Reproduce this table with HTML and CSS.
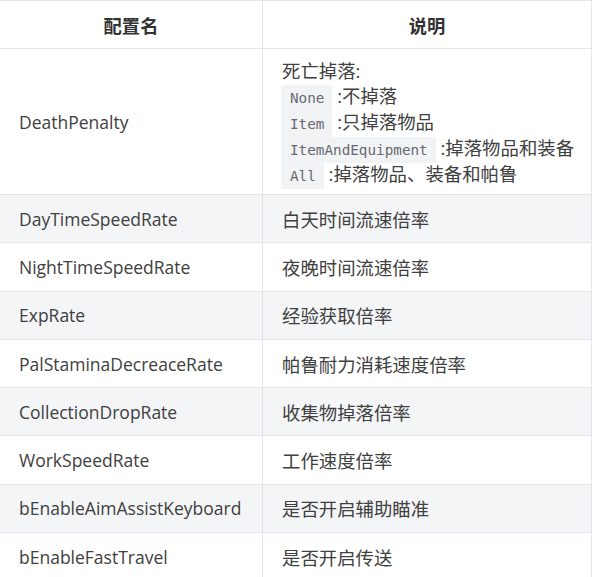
FILE: index.html
```html
<!DOCTYPE html>
<html lang="zh-CN">
<head>
<meta charset="utf-8">
<link rel="stylesheet" href="styles.css">
</head>
<body>
<table class="cfg">
  <thead>
    <tr><th class="c1">配置名</th><th class="c2">说明</th></tr>
  </thead>
  <tbody>
    <tr class="tall">
      <td>DeathPenalty</td>
      <td class="desc">
        <div class="ln">死亡掉落:</div>
        <div class="ln"><code>None</code> :不掉落</div>
        <div class="ln"><code>Item</code> :只掉落物品</div>
        <div class="ln"><code>ItemAndEquipment</code> :掉落物品和装备</div>
        <div class="ln"><code>All</code> :掉落物品、装备和帕鲁</div>
      </td>
    </tr>
    <tr><td>DayTimeSpeedRate</td><td class="desc">白天时间流速倍率</td></tr>
    <tr><td>NightTimeSpeedRate</td><td class="desc">夜晚时间流速倍率</td></tr>
    <tr><td>ExpRate</td><td class="desc">经验获取倍率</td></tr>
    <tr><td>PalStaminaDecreaceRate</td><td class="desc">帕鲁耐力消耗速度倍率</td></tr>
    <tr><td>CollectionDropRate</td><td class="desc">收集物掉落倍率</td></tr>
    <tr><td>WorkSpeedRate</td><td class="desc">工作速度倍率</td></tr>
    <tr><td>bEnableAimAssistKeyboard</td><td class="desc">是否开启辅助瞄准</td></tr>
    <tr><td>bEnableFastTravel</td><td class="desc">是否开启传送</td></tr>
  </tbody>
</table>
</body>
</html>
```

FILE: styles.css
```css
html, body {
  margin: 0;
  padding: 0;
  background: #ffffff;
}
body {
  font-family: "Open Sans", "Noto Sans CJK SC", sans-serif;
  font-size: 17.5px;
  color: #404040;
}
.cfg {
  border-collapse: collapse;
  width: 593px;
  margin-left: -1px;
  table-layout: fixed;
}
.cfg th, .cfg td {
  border: 1px solid #e3e5e8;
  padding: 0 0 0 19px;
  text-align: left;
  vertical-align: middle;
  height: 48.3px;
  box-sizing: border-box;
}
.cfg th {
  text-align: center;
  font-weight: 700;
  font-size: 18.3px;
  height: 48px;
  padding: 0;
  color: #333333;
}
.cfg .desc {
  font-size: 18.4px;
}
.cfg .c1 { width: 263px; }
.cfg tbody tr:nth-child(2n) { background: #f4f5f7; }
.cfg tr.tall td { height: 146px; }
.cfg tr.tall td.desc { padding-top: 5px; }
.ln {
  line-height: 24.3px;
  white-space: nowrap;
}
code {
  font-family: "DejaVu Sans Mono", monospace;
  font-size: 14.3px;
  color: #666a70;
  background: #f2f3f5;
  padding: 5px 8px 5px 9px;
  margin-left: -1px;
}
```
